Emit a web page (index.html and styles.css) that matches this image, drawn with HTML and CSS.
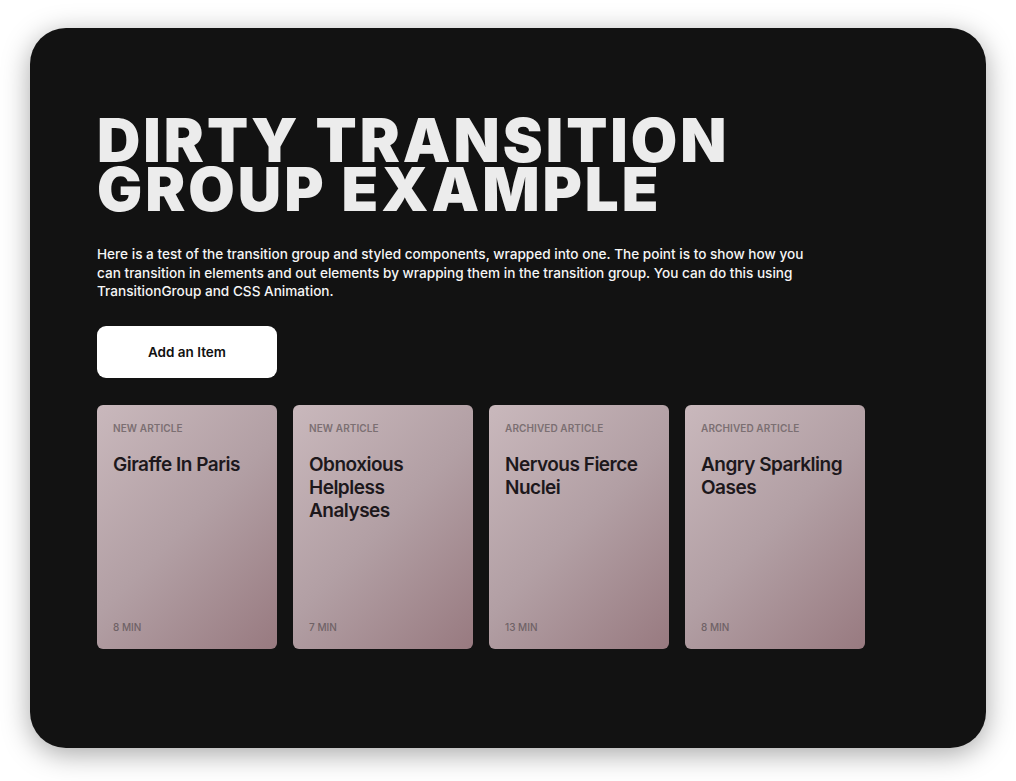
FILE: index.html
```html
<!DOCTYPE html>
<html lang="en">
<head>
<meta charset="utf-8">
<title>Dirty Transition Group Example</title>
<link rel="stylesheet" href="styles.css">
</head>
<body>
<main class="panel">
  <h1 class="title">DIRTY TRANSITION<br>GROUP EXAMPLE</h1>
  <p class="intro">Here is a test of the transition group and styled components, wrapped into one. The point is to show how you can transition in elements and out elements by wrapping them in the transition group. You can do this using TransitionGroup and CSS Animation.</p>
  <button class="add-btn" type="button">Add an Item</button>
  <section class="cards">
    <article class="card">
      <div class="card-label">NEW ARTICLE</div>
      <h2 class="card-title">Giraffe In Paris</h2>
      <div class="card-time">8 MIN</div>
    </article>
    <article class="card">
      <div class="card-label">NEW ARTICLE</div>
      <h2 class="card-title">Obnoxious Helpless Analyses</h2>
      <div class="card-time">7 MIN</div>
    </article>
    <article class="card">
      <div class="card-label">ARCHIVED ARTICLE</div>
      <h2 class="card-title">Nervous Fierce Nuclei</h2>
      <div class="card-time">13 MIN</div>
    </article>
    <article class="card">
      <div class="card-label">ARCHIVED ARTICLE</div>
      <h2 class="card-title">Angry Sparkling Oases</h2>
      <div class="card-time">8 MIN</div>
    </article>
  </section>
</main>
</body>
</html>
```
FILE: styles.css
```css
* { box-sizing: border-box; }
html, body { margin: 0; padding: 0; background: #ffffff; }
body {
  padding: 28px 30px 33px;
  font-family: "Inter", "Liberation Sans", sans-serif;
}
.panel {
  width: 956px;
  height: 720px;
  background: #121212;
  border-radius: 36px;
  box-shadow: 0 6px 28px rgba(0, 0, 0, 0.35);
  padding: 88px 67px 0;
  display: flex;
  flex-direction: column;
  align-items: flex-start;
}
.title {
  margin: 0;
  font-family: "Inter", "Liberation Sans", sans-serif;
  font-weight: 900;
  font-size: 60px;
  line-height: 49px;
  letter-spacing: 3px;
  color: #ececec;
}
.intro {
  margin: 31px 0 0;
  max-width: 720px;
  font-family: "Inter", "Liberation Sans", sans-serif;
  font-weight: 500;
  font-size: 13.6px;
  line-height: 18.5px;
  color: #f6f6f6;
}
.add-btn {
  margin-top: 25px;
  width: 180px;
  height: 52px;
  border: 0;
  border-radius: 9px;
  background: #ffffff;
  color: #111111;
  font-family: "Inter", "Liberation Sans", sans-serif;
  font-weight: 600;
  font-size: 13.5px;
  cursor: pointer;
}
.cards {
  margin-top: 27px;
  display: flex;
  gap: 16px;
}
.card {
  width: 180px;
  height: 244px;
  border-radius: 6px;
  background: linear-gradient(135deg, #c9b8bc 0%, #b29fa4 50%, #987a80 100%);
  padding: 17px 16px 16px;
  display: flex;
  flex-direction: column;
}
.card-label {
  font-size: 10px;
  font-weight: 600;
  letter-spacing: 0.1px;
  color: #7b6f72;
  line-height: 12px;
}
.card-title {
  margin: 19px 0 0;
  font-size: 19px;
  font-weight: 600;
  line-height: 23px;
  letter-spacing: -0.5px;
  color: #1d181c;
}
.card-time {
  margin-top: auto;
  font-size: 10px;
  font-weight: 500;
  line-height: 12px;
  color: #6f6266;
}
```
